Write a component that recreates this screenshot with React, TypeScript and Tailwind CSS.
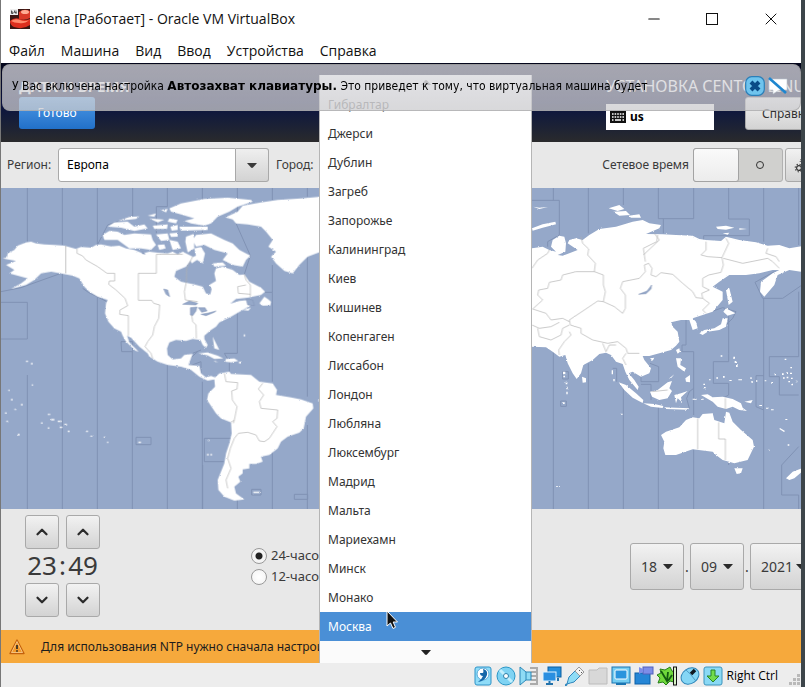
import React from "react";
import { Minus, X, ChevronUp, ChevronDown } from "lucide-react";

const guestFont = "font-['Noto_Sans','Open_Sans',sans-serif]";
const hostFont = "font-['Open_Sans','Noto_Sans',sans-serif]";
const raised =
  "rounded-[3px] border border-[#a9a9a9] bg-gradient-to-b from-[#f2f2f2] to-[#d3d3d3]";

const cities = [
  "Гибралтар", "Джерси", "Дублин", "Загреб", "Запорожье", "Калининград", "Киев",
  "Кишинев", "Копенгаген", "Лиссабон", "Лондон", "Любляна", "Люксембург", "Мадрид",
  "Мальта", "Мариехамн", "Минск", "Монако", "Москва",
];

function Caret({ className = "" }: { className?: string }) {
  return (
    <svg className={"h-[5px] w-[10px] shrink-0 " + className} viewBox="0 0 10 5" aria-hidden="true">
      <path d="M0 0H10L6 4.6Q5 5.3 4 4.6Z" fill="currentColor" />
    </svg>
  );
}

function TitleBar() {
  return (
    <header className="flex h-[37px] shrink-0 items-center bg-white pl-[9px] text-[14px] text-[#111]">
      <svg className="h-5 w-5" viewBox="0 0 20 20" aria-hidden="true">
        <rect width="20" height="20" fill="#3b1714" />
        <path d="M9 3Q14 -1 20 2V9Q15 12 9 10Z" fill="#d93a28" />
        <ellipse cx="15" cy="3" rx="4" ry="2" fill="#ffad94" />
        <path d="M0 12Q4 8 10 10Q15 12 20 10V16Q13 21 4 18Q0 16 0 12Z" fill="#dd2f1e" />
        <path d="M1 12Q5 9 10 11Q15 13 19 11Q15 15 9 14Q4 14 1 12Z" fill="#ff8a6c" />
        <rect width="8" height="6" fill="#eee" />
        <path d="M1.5 1.5V4.5H3V3H1.5M4.5 1.5V3.5H6.5M6 1.5V5" stroke="#333" strokeWidth=".8" fill="none" />
      </svg>
      <h1 className="ml-[5px] whitespace-nowrap">elena [Работает] - Oracle VM VirtualBox</h1>
      <div className="ml-auto flex h-full">
        <button aria-label="Свернуть" className="flex w-[58px] items-center justify-center">
          <Minus className="h-[18px] w-[18px]" strokeWidth={1.4} />
        </button>
        <button aria-label="Развернуть" className="flex w-[58px] items-center justify-center">
          <svg className="h-3 w-3" viewBox="0 0 12 12" aria-hidden="true">
            <rect x=".5" y=".5" width="11" height="11" fill="none" stroke="#111" />
          </svg>
        </button>
        <button aria-label="Закрыть" className="flex w-[60px] items-center justify-center">
          <X className="h-5 w-5" strokeWidth={1.2} />
        </button>
      </div>
    </header>
  );
}

function MenuBar() {
  return (
    <nav className="flex h-[26px] shrink-0 items-center gap-4 bg-white pl-2 text-[14px] text-[#111]">
      {["Файл", "Машина", "Вид", "Ввод", "Устройства", "Справка"].map((m) => (
        <button key={m}>{m}</button>
      ))}
    </nav>
  );
}

function InstallerHeader() {
  return (
    <div className="flex h-[79px] shrink-0 items-start bg-gradient-to-b from-[#03051a] via-[#0a1040] to-[#2a2a2c] pt-3 text-white">
      <div className="pl-[18px]">
        <h2 className="text-[15px] leading-[22px] font-bold">ДАТА И ВРЕМЯ</h2>
        <button className="h-8 w-[76px] rounded-[3px] bg-gradient-to-b from-[#4f9ae6] to-[#2170c9] text-[12px]">
          Готово
        </button>
      </div>
      <div className="ml-auto w-[195px] shrink-0">
        <div className="text-[16px] leading-[22px] whitespace-nowrap">УСТАНОВКА CENTOS LINUX 8</div>
        <div className="flex items-start">
          <button className="mt-[7px] flex h-[26px] w-[108px] shrink-0 items-center gap-1 bg-white pl-1 text-[12px] font-bold text-black">
            <svg className="h-3 w-4" viewBox="0 0 16 12" aria-hidden="true">
              <rect width="16" height="12" fill="#111" />
              <path d="M2 3H14M2 6H14" stroke="#fff" strokeWidth="1.5" strokeDasharray="1.6 1" />
              <path d="M2 9H3.5M5 9H11M12.5 9H14" stroke="#fff" strokeWidth="1.5" />
            </svg>
            us
          </button>
          <button className={raised + " ml-[31px] h-[33px] w-[88px] shrink-0 pl-4 text-left text-[12px] text-[#333]"}>
            Справка
          </button>
        </div>
      </div>
    </div>
  );
}

function LocationRow() {
  return (
    <div className="-mr-[20px] flex h-[46px] shrink-0 items-center pl-[6px] text-[12px] text-[#3a3a3a]">
      <label htmlFor="region" className="w-[51px]">Регион:</label>
      <div className="flex h-[34px] w-[211px] shrink-0">
        <select
          id="region"
          className="w-[178px] appearance-none rounded-l-[3px] border border-[#a9a9a9] bg-white pl-2 text-[12px] text-black"
        >
          <option>Европа</option>
        </select>
        <button
          aria-label="Открыть список регионов"
          className="flex flex-1 items-center justify-center rounded-r-[3px] border border-l-0 border-[#a9a9a9] bg-gradient-to-b from-[#efefef] to-[#d3d3d3]"
        >
          <Caret />
        </button>
      </div>
      <label htmlFor="city" className="ml-[7px]">Город:</label>
      <input id="city" defaultValue="" className="ml-2 h-[34px] w-[180px] rounded-[3px] border border-[#a9a9a9] bg-white" />
      <label htmlFor="ntp" className="ml-auto">Сетевое время</label>
      <div className="relative ml-1 h-[34px] w-[90px] shrink-0 rounded-[3px] border border-[#b1b1b1] bg-[#d0d0ce]">
        <input id="ntp" type="checkbox" role="switch" className="absolute inset-0 h-full w-full appearance-none" />
        <span className="pointer-events-none absolute -top-px -left-px h-[34px] w-[46px] rounded-[3px] border border-[#a3a3a3] bg-gradient-to-b from-[#fafafa] to-[#ececec]" />
        <span className="pointer-events-none absolute top-3 right-[18px] h-2 w-2 rounded-full border border-[#333]" />
      </div>
      <button aria-label="Настройки NTP" className={raised + " ml-[2px] flex h-[34px] w-[36px] shrink-0 items-center pl-2"}>
        <svg className="h-4 w-4" viewBox="0 0 16 16" fill="none" stroke="#333" aria-hidden="true">
          <circle cx="5" cy="11" r="2.4" strokeWidth="1.2" />
          <circle cx="5" cy="11" r="3.8" strokeWidth="1.2" strokeDasharray="1.2 1.8" />
          <circle cx="9" cy="4" r="1.6" strokeWidth="1.2" />
          <circle cx="9" cy="4" r="2.8" strokeWidth="1" strokeDasharray="1 1.5" />
        </svg>
      </button>
    </div>
  );
}

function WorldMap() {
  return (
    <svg
      className="block w-full shrink-0 bg-[#95a8c9]"
      viewBox="0 9 2400 963"
      preserveAspectRatio="xMinYMin slice"
      role="img"
      aria-label="Карта часовых поясов"
    >
      <defs>
        <filter id="coast" x="0" y="0" width="100%" height="100%">
          <feTurbulence type="fractalNoise" baseFrequency="0.16" numOctaves="2" seed="4" />
          <feDisplacementMap in="SourceGraphic" scale="6" xChannelSelector="R" yChannelSelector="G" />
        </filter>
      </defs>
      {/* ocean meridians */}
      <g stroke="#8092b4" strokeWidth="3" fill="none">
        <path d="M79 9V170M184 9V180M184 265V972M289 9V180L320 120L395 93V9M289 335V972M499 9V65H466V145M394 500V972M499 540V972M604 9V150M604 590V972M709 9V110M709 380V505H670M814 9V45M814 240V322M814 322V590M919 9V35M919 215V635M919 720V972M814 800V972M709 945V972M957 9V972" />
        <path d="M0 320L60 308L180 265M0 352H79V462H0M79 570V972M245 310L262 322L318 350M605 840V972M610 760H690M610 760V830H668M360 470H395V500H362ZM405 757H450V779H405ZM752 913H780V930H752ZM880 928H920V943H880ZM560 545L600 530V565M575 505L600 495M670 505L685 530V560M705 115L748 212L730 268M792 322H814M562 525L590 500" />
        <g transform="translate(1575 0)">
          <path d="M18 46H100V150L65 170V185M82 9V46M82 495V972M187 9V145M187 535V972M292 9V60M292 610V972M397 9V101H503V9M412 101V145M608 9V102H670V152H533V165M713 9V170M713 340V972M818 9V180M818 320V515M480 405V480H468V500H503V690M503 700V972M818 515H730V575H760V630H818M608 505V530H562V595H608V630L590 640M713 675L690 665V572H713M818 785L767 840V930H818V972M608 370V505M608 690V840M397 660V972M398 590H345V545M398 590V545L372 535M345 598H375V645M260 550H272V590M110 560H127V582H110ZM104 648H121V664H104ZM687 292L710 340H770L828 300M687 292L745 260M540 385L590 368L630 380L620 400L590 430M482 640L490 620L503 610M482 640L490 670" />
        </g>
      </g>
      <g fill="#fff" filter="url(#coast)">
        {/* the Americas */}
        <path d="M5 220L18 217L20 205L40 195L50 182L75 172L90 170L105 175L130 178L160 180L190 182L225 192L240 186L270 188L285 180L300 178L330 184L355 182L375 190L400 195L425 205L445 200L470 203L500 205L515 200L530 208L545 200L575 215L570 225L555 245L525 258L520 275L540 290L580 298L605 305L615 325L628 328L632 312L625 300L645 288L640 265L645 250L665 245L695 255L715 270L730 268L745 290L780 308L792 320L780 330L740 338L705 342L688 356L715 348L745 345L748 362L720 378L690 395L670 405L655 412L645 425L630 435L610 452L610 462L620 480L615 489L605 480L598 465L575 462L555 468L525 465L505 472L498 490L500 510L515 523L540 520L550 510L575 507L568 525L562 540L595 543L600 565L615 577L630 573L642 577L655 565L685 560L690 567L720 568L750 570L775 590L815 595L828 615L825 630L870 637L900 643L935 655L937 670L915 695L908 730L895 743L860 755L840 770L830 790L805 810L780 815L785 830L765 837L745 837L745 850L725 853L725 865L712 875L718 890L700 905L705 925L730 943L700 947L670 935L652 915L650 885L660 860L670 835L675 805L685 775L692 745L690 712L660 700L645 685L625 655L618 645L622 625L642 605L640 583L620 587L595 575L570 555L540 545L500 540L470 530L445 515L440 505L415 485L390 458L378 452L385 472L413 500L403 497L375 470L365 452L360 440L340 430L322 410L312 385L315 355L320 345L290 335L265 320L250 305L235 280L215 272L180 265L150 260L120 265L100 285L75 300L30 312L60 295L80 280L50 272L25 265L40 255L15 240L45 228Z" />
        <path d="M673 97L710 80L725 62L780 52L830 45L900 40L960 35V200L920 215L895 240L875 265L850 258L825 235L810 215L825 200L802 185L815 165L795 140L780 125L740 118L705 115L695 103Z" />
        <path d="M505 70L540 55L610 42L680 38L750 45L755 50L710 65L685 80L650 95L630 115L610 122L570 115L550 108L580 100L540 88L510 80ZM535 125L620 125V135L540 137ZM585 150L630 145L670 165L695 175L715 195L748 212L735 225L725 245L695 240L665 225L680 205L640 195L610 180L585 185L575 165ZM555 155L578 147L580 190L560 202L553 170ZM580 190L600 186L612 205L605 235L588 225L572 235L565 220L585 212ZM635 235L665 232L675 242L640 245Z" />
        <path d="M305 150L325 138L350 140L370 150L400 145L450 148L455 165L465 180L450 195L420 190L385 190L350 165L310 165ZM320 125L340 112L380 110L400 125L430 118L440 130L400 138L360 128ZM350 108L385 96L415 94L405 102ZM440 92L465 85L460 95ZM445 100L490 104L470 112ZM455 122L500 118L498 132L460 132ZM465 148L500 145L505 165L480 168ZM505 165L530 170L540 190L515 195ZM508 125L530 120L530 135L512 137ZM470 180L490 178L494 190L475 195ZM480 75L500 72L495 82ZM505 100L530 105L525 115L500 110ZM505 145L530 143L530 155L510 156Z" />
        <path d="M775 355L790 335L800 342L810 350L808 361L785 362ZM725 375L750 368L742 377ZM592 505L620 502L650 512L667 520L640 522L620 511ZM675 522L700 520L712 528L690 532L672 530ZM640 528L652 531H640ZM714 530H722V535H714ZM728 448H732V454H728ZM308 755H313V758H308ZM318 770H322V774H318ZM620 765H626V768H620ZM618 807H623V811H618ZM628 807H633V811H628ZM412 770H420V774H412ZM757 920H776V924H757ZM952 645H957V649H952ZM635 455L640 490L655 495ZM918 935L932 942Z" />
        {/* Eurasia and Oceania */}
        <g transform="translate(1575 0)">
          <path d="M-30 190L18 190L50 185L70 195L90 200L75 185L80 165L100 152L115 155L120 175L118 200L95 210L110 212L130 205L155 195L125 175L130 165L150 160L170 165L190 150L220 132L270 125L320 110L350 105L370 115L405 120L400 130L360 147L410 148L450 150L500 152L520 162L540 165L585 168L600 155L640 165L690 172L725 182L760 180L790 190L835 182V262L790 255L755 270L745 300L715 335L702 320L705 290L740 265L760 255L740 255L700 265L660 270L610 270L580 290L560 305L590 320L590 345L560 380L530 390L500 400L510 410L515 430L500 435L490 405L465 405L435 412L440 425L455 440L460 470L450 482L435 495L400 505L370 513L350 513L355 525L375 550L370 565L345 575L320 560L308 565L325 585L338 605L335 615L310 585L298 560L290 537L270 530L255 510L240 503L220 507L200 525L172 540L165 565L152 582L140 565L125 535L118 510L100 515L80 500L60 487L18 485L-30 480Z" />
          <path d="M405 750L420 740L460 727L480 705L500 697L520 700L530 687L560 685L565 705L595 715L600 680L610 683L620 710L645 735L680 765L684 785L665 825L625 835L590 825L570 810L560 800L500 793L450 810L418 810L412 790L415 770ZM625 850L650 850L645 865L632 867ZM780 880L800 860L828 850V860L805 880L790 885Z" />
          <path d="M278 592L300 600L330 625L352 645L350 654L320 638L295 615ZM352 655L385 657L412 663L410 669L375 665ZM372 620L395 615L425 592L438 588L430 610L438 618L425 640L400 645L378 635ZM445 630L465 625L485 618L465 637L468 652L455 640L450 655ZM450 520L465 520L463 540L480 550L475 560L455 545ZM478 580L492 570L492 592L480 590ZM525 630L545 628L560 637L590 635L620 642L645 655L650 668L663 678L640 675L620 665L600 672L575 665L560 650ZM415 667L450 668L490 670L485 674L420 672ZM655 650L680 645L675 655ZM168 575L180 580L180 592L170 593ZM450 495L460 490L462 500L455 506ZM372 520L385 518L380 527Z" />
          <path d="M600 315L610 310L620 350L608 360ZM592 380L600 370L628 385L605 392ZM590 400L605 400L600 425L580 435L545 440L530 450L520 445L535 435L565 430L585 418ZM248 70L280 60L295 72L275 78ZM262 80L300 78L312 90L280 92ZM308 92L340 88L345 98L315 98ZM18 130L50 118L88 110L90 118L50 128L20 137ZM22 65L40 68L66 66L40 72ZM570 125L600 122L625 128L600 134L575 132ZM640 130L663 132L640 134ZM590 145L610 143L605 149ZM820 312L828 322Z" />
          <path d="M111 560h7v8h-7ZM112 572h5v5h-5ZM119 590h5v8h-5ZM121 605h4v8h-4ZM121 620h4v8h-4ZM109 652h7v5h-7ZM257 556h4v12h-4ZM262 582h4v7h-4ZM283 686h7v3h-7ZM90 903h12v2h-12ZM584 511h5v4h-5ZM622 515h5v6h-5ZM626 528h5v6h-5ZM630 540h5v6h-5ZM571 577h5v4h-5ZM591 573h5v5h-5ZM610 585h7v3h-7ZM637 583h9v3h-9ZM673 577h4v5h-4ZM676 588h5v5h-5ZM690 586h4v4h-4ZM716 586h5v3h-5ZM736 591h5v3h-5ZM746 567h4v4h-4ZM768 565h5v5h-5ZM771 577h5v4h-5ZM781 562h5v5h-5ZM792 563h6v4h-6ZM782 575h5v5h-5ZM795 578h5v4h-5ZM787 588h5v4h-5ZM796 596h5v5h-5ZM809 587h5v5h-5ZM776 521h5v4h-5ZM793 546h5v4h-5ZM532 596h5v4h-5ZM534 606h5v4h-5ZM549 583h5v3h-5ZM726 794h5v3h-5ZM785 778h5v4h-5ZM762 729l15 9l-3 3l-14 -9ZM700 660h8v3h-8ZM720 668h7v3h-7ZM735 673h8v3h-8ZM500 641h12v3h-12ZM525 641h8v3h-8ZM778 702h6v3h-6ZM430 580l15 -12l-12 14Z" />
        </g>
        <g transform="translate(0 552)">
          <path d="M40 120h6v3h-6ZM60 105h5v4h-5ZM30 90h5v4h-5ZM140 135h8v3h-8ZM150 150h10v4h-10ZM170 155h12v4h-12ZM176 173h8v4h-8ZM190 165h8v4h-8ZM200 185h6v4h-6ZM255 185h6v4h-6ZM268 200h6v3h-6ZM140 175h5v4h-5ZM120 160h5v4h-5ZM12 130h5v4h-5ZM16 155h5v4h-5ZM75 -25h6v4h-6ZM90 -18h5v4h-5ZM50 195h6v4h-6ZM22 62h4v4h-4ZM92 46h4v4h-4Z" />
        </g>
      </g>
      {/* lakes and inland water */}
      <g fill="#95a8c9" stroke="#8092b4" strokeWidth="1.5">
        <path d="M545 358L565 348L590 355L585 360ZM568 368L588 366L585 378L575 392L568 390ZM592 368L612 368L618 378L602 382ZM600 388L622 384L645 378L640 382L615 392ZM488 312L500 315L506 335L495 328Z" />
        <path d="M735 342L755 345L760 362L740 360ZM1913 328L1938 318L1952 300L1950 312L1935 326ZM425 200L432 208L424 206Z" />
      </g>
      {/* zone borders on land */}
      <g stroke="#b0b0b0" strokeWidth="2" fill="none" strokeLinejoin="round">
        <path d="M194 182V265M228 192L228 205L245 213L255 225L290 245L318 265H341V288H325L323 298L345 315L372 340L380 362L357 375L356 388L382 392V452M412 265H466V208H545M412 265V346H452L458 355L476 360L473 400L460 425L455 450L440 470L432 485L450 505L455 520M575 215L557 250L556 290L550 320L553 345M572 390L575 410L585 420L586 460M730 268L735 285L748 300V335M735 300L710 305L712 325L748 328M553 345L590 350" />
        <path d="M670 565L675 590L710 593L708 612L692 618L694 645L708 665L700 705L690 712M700 705L697 715M785 595L772 612L788 630L775 650L780 670L830 675L828 700L815 710L828 725L805 760L790 770L775 768L765 750L740 742L712 745L700 760L688 790L680 820L690 850L675 885L680 910" />
        <g transform="translate(1575 0)">
          <path d="M18 250L35 225L65 205L70 195M165 155L170 175L188 192L185 210L208 235L205 260L150 260L110 270L105 285L70 292L65 310L38 315L35 330L50 345L20 372L60 385L75 405L110 400L130 410M205 260L232 270V300L238 320L232 350L265 365L290 385L298 370V330L283 310L290 290L340 280L358 260L355 240L368 235L378 250L375 270L390 275L405 263L440 268L470 295L500 320L510 338L530 340L550 355L530 375L540 385M358 230L352 190L392 170L395 150M352 210L400 165L385 145M530 340L527 325L550 315L530 305V280L548 270L585 262L592 240L588 218L545 215L525 210L540 195L540 170M588 218L608 175L600 160M592 220L650 235L725 220L740 230L760 250M725 190L720 205L750 215L760 230M232 350L215 348L175 375L130 405L133 420L165 430V445L200 465L245 475L275 470L300 490L305 505L340 505M18 420L40 430L75 425L100 412M35 430L40 455L75 465L105 450L110 430L130 420M130 440L135 450L115 470L98 495L100 510M230 475L240 500L250 480L270 480M300 540L290 520L300 505M515 700V793M578 712V762H598V825M598 640V672M378 620L425 615" />
        </g>
      </g>
    </svg>
  );
}

function TimeColumn({ value, label }: { value: string; label: string }) {
  const step = raised + " flex w-[34px] items-center justify-center text-[#2b2b2b]";
  return (
    <div className="flex flex-col items-center">
      <button aria-label={label + " больше"} className={step + " h-[34px]"}>
        <ChevronUp className="h-[18px] w-[18px]" strokeWidth={3} />
      </button>
      <output aria-label={label} className="h-[34px] text-[26px] leading-8">{value}</output>
      <button aria-label={label + " меньше"} className={step + " h-[34px]"}>
        <ChevronDown className="h-[18px] w-[18px]" strokeWidth={3} />
      </button>
    </div>
  );
}

function DateSelect({ value, label, width }: { value: string; label: string; width: string }) {
  return (
    <div className={"relative h-[47px] shrink-0 " + width}>
      <select aria-label={label} className={raised + " h-full w-full appearance-none pl-[10px] text-[14px]"}>
        <option>{value}</option>
      </select>
      <Caret className="pointer-events-none absolute top-[21px] right-[11px] text-[#2b2b2b]" />
    </div>
  );
}

function ClockPanel() {
  const radio =
    "h-4 w-4 appearance-none rounded-full border border-[#999] bg-[radial-gradient(circle,#fff_0,#f2f2f2_100%)] checked:bg-[radial-gradient(circle,#222_0_3px,#f4f4f4_4px)]";
  return (
    <div className="-mr-[16px] flex h-[121px] shrink-0 items-start pt-[6px] pl-6 text-[#3a3a3a]">
      <div className="flex">
        <TimeColumn value="23" label="Часы" />
        <div className="w-[7px] pt-[34px] text-center text-[26px] leading-8">:</div>
        <TimeColumn value="49" label="Минуты" />
      </div>
      <fieldset className="mt-[30px] ml-[151px] flex w-[90px] flex-col text-[13px] leading-[21px] whitespace-nowrap">
        <label className="flex items-center gap-1">
          <input type="radio" name="fmt" defaultChecked className={radio} />
          24-часовой
        </label>
        <label className="flex items-center gap-1">
          <input type="radio" name="fmt" className={radio} />
          12-часовой
        </label>
      </fieldset>
      <div className="mt-7 ml-auto flex items-center text-[14px]">
        <DateSelect value="18" label="День" width="w-[54px]" />
        <span className="w-[6px] text-center">.</span>
        <DateSelect value="09" label="Месяц" width="w-[54px]" />
        <span className="w-[6px] text-center">.</span>
        <DateSelect value="2021" label="Год" width="w-[67px]" />
      </div>
    </div>
  );
}

function CityMenu() {
  return (
    <div className="absolute top-3 left-[318px] w-[213px] border-x border-[#b5b5b5] bg-white text-[12px] text-[#333]">
      <div className="flex h-[15px] items-center justify-center bg-[#fafafa]">
        <Caret className="rotate-180 text-[#777]" />
      </div>
      <ul role="listbox" aria-label="Город">
        {cities.map((c) => (
          <li
            key={c}
            role="option"
            aria-selected={c === "Москва"}
            className="h-[29px] pl-2 leading-[29px] first:text-[#777] aria-selected:bg-[#4a8fd6] aria-selected:text-white"
          >
            {c}
          </li>
        ))}
      </ul>
      <div className="flex h-[22px] items-center justify-center bg-[#fbfbfb]">
        <Caret className="text-[#222]" />
      </div>
    </div>
  );
}

function Notice() {
  return (
    <div
      role="status"
      className="absolute top-px right-0 left-px flex h-[47px] items-center rounded-lg border border-[#999]/60 bg-gradient-to-b from-[#dcdce2]/75 to-[#cbcbce]/75 pr-3 pb-1 pl-[9px] font-['DejaVu_Sans_Condensed','DejaVu_Sans',sans-serif] text-[12px] text-black"
    >
      <p className="whitespace-nowrap">
        У Вас включена настройка <b className="font-['DejaVu_Sans',sans-serif]">Автозахват клавиатуры.</b> Это приведет к тому, что виртуальная машина будет
      </p>
      <button aria-label="Закрыть сообщение" className="ml-auto">
        <svg className="h-5 w-5" viewBox="0 0 20 20">
          <rect x=".7" y=".7" width="18.6" height="18.6" rx="6" fill="#6fc4ee" stroke="#2b7fb8" strokeWidth="1.2" />
          <path d="M6 6L14 14M14 6L6 14" stroke="#0b4a86" strokeWidth="4" />
        </svg>
      </button>
      <button aria-label="Больше не показывать" className="ml-[3px]">
        <svg className="h-5 w-5" viewBox="0 0 20 20">
          <path d="M1 3H19V14H11L5 18V14H1Z" fill="#fff" stroke="#b9c4cc" strokeWidth=".6" />
          <path d="M1 2L18 17" stroke="#1e86cf" strokeWidth="2.6" />
        </svg>
      </button>
    </div>
  );
}

function StatusBar() {
  const icon = "h-5 w-5 shrink-0";
  const b = "#1667a8";
  return (
    <footer className="flex h-6 shrink-0 items-center justify-end gap-[3px] bg-[#ededed] pt-[2px] text-[12px] text-black">
      <svg className={icon} viewBox="0 0 20 20"><rect x="2" y="1" width="16" height="18" rx="2" fill="#8fdcf8" stroke="#2e93c8" /><circle cx="10" cy="8" r="6" fill="#fff" stroke="#5aa9d8" /><path d="M10 3Q15 4 14 9Q12 15 5 16Q9 13 10 10Q7 10 7 7H9.500Q11 7 10 3Z" fill={b} /></svg>
      <svg className={icon} viewBox="0 0 20 20"><circle cx="10" cy="10" r="9" fill="#7fd3f3" stroke="#2b97c7" /><path d="M10 10L4 4M10 10L16 16" stroke="#c1effd" strokeWidth="3" /><circle cx="10" cy="10" r="2.5" fill="#fff" stroke="#2b7fa8" /></svg>
      <svg className={icon} viewBox="0 0 20 20"><path d="M11 2H18V18H11M12 6H18M12 10H18M12 14H18" stroke="#ababab" strokeWidth="2" fill="none" /><path d="M1 1L7 6H12V14H7L1 19Z" fill="#8edbf5" stroke="#2b88b8" /><path d="M7 6V14" stroke="#2b88b8" /></svg>
      <svg className={icon} viewBox="0 0 20 20"><rect x="6" y="1" width="13" height="10" fill="#248fdc" stroke="#0b5fa0" /><rect x="1" y="6" width="13" height="9" fill="#2a8fe0" stroke="#dff3ff" /><path d="M4 18H11M7.500 15V18M16 12V15" stroke="#2272ab" strokeWidth="2" /></svg>
      <svg className={icon} viewBox="0 0 20 20"><path d="M10 5L15 10L9 16Q5 17 2 18Q3 14 4 11Z" fill="#8edcf6" stroke="#2f86bd" /><path d="M14 1L19 6L15 10L10 5Z" fill="#f4f4f4" stroke="#999" /><path d="M14 4L15 5M16 6L17 7" stroke="#555" /><path d="M2 18L0 20" stroke="#2f86bd" strokeWidth="2" /></svg>
      <svg className={icon} viewBox="0 0 20 20"><path d="M1 4H9L11 2H19V18H1Z" fill="#d8d8d8" stroke="#bcbcbc" /></svg>
      <svg className={icon} viewBox="0 0 20 20"><rect x="1" y="1" width="18" height="16" fill="#74cdf2" stroke="#1a75b2" /><rect x="4" y="4" width="12" height="9" rx="1" fill="#2b94dd" stroke="#fff" /><path d="M5 18H15" stroke="#1a75b2" strokeWidth="2" /></svg>
      <svg className={icon} viewBox="0 0 20 20"><rect x="1" y="7" width="15" height="11" fill="#2586d6" stroke="#0d61a8" /><rect x="9" y="1" width="10" height="7" fill="#7d8de8" stroke="#5261bb" /><path d="M9 3L5 1V8L9 6Z" fill="#7d8de8" /></svg>
      <svg className={icon} viewBox="0 0 20 20"><path d="M3 3L8 4L13 1L15 5L17 6V16L13 15L9 19L6 16L1 17L3 12L0 9L4 7Z" fill="#70d83c" stroke="#267f18" /><path d="M4 5L10 15L11 6M11 15L15 9" stroke="#125b10" strokeWidth="1.800" fill="none" /><rect x="16.5" y="1" width="3" height="18" fill="#d8f2c8" stroke="#111" /></svg>
      <svg className={icon} viewBox="0 0 20 20"><ellipse cx="10" cy="10" rx="9.500" ry="7.500" transform="rotate(-35 10 10)" fill="#85d6f5" stroke="#2f85b8" /><path d="M6 4Q10 7 15 14" stroke="#4e9cc8" fill="none" /><path d="M11 8L15 4" stroke="#101820" strokeWidth="3.500" /></svg>
      <svg className={icon} viewBox="0 0 20 20"><rect x="1" y="1" width="18" height="18" rx="2" fill="#8ad9f5" stroke="#3d94bd" /><path d="M8 4H12V10H16L10 16L4 10H8Z" fill="#71dc4d" stroke="#298527" /></svg>
      <span className="ml-px whitespace-nowrap">Right Ctrl</span>
      <svg className="ml-2 h-[14px] w-3 self-end" viewBox="0 0 12 14" fill="#b9b9b9"><path d="M8 1h3v3H8ZM8 5h3v3H8ZM4 5h3v3H4ZM8 9h3v3H8ZM4 9h3v3H4ZM0 9h3v3H0Z" /></svg>
    </footer>
  );
}

export default function App() {
  return (
    <div className={"flex min-h-screen bg-[#3d454a] " + hostFont}>
      <div className="mr-1 flex min-w-0 flex-1 flex-col border-l border-[#777] bg-[#e8e8e8]">
        <TitleBar />
        <MenuBar />
        <main className={"relative flex flex-col overflow-hidden " + guestFont}>
          <InstallerHeader />
          <LocationRow />
          <WorldMap />
          <ClockPanel />
          <div className="flex h-[33px] shrink-0 items-center bg-[#f6a93c] pl-2 text-[12px] whitespace-nowrap text-[#1c1c1c]">
            <svg className="h-4 w-4" viewBox="0 0 16 16" aria-hidden="true">
              <path d="M8 1L15 14.5H1Z" fill="#f39a2c" stroke="#c4610c" strokeWidth="1.4" strokeLinejoin="round" />
              <path d="M8 2.5L13.5 13.5H2.5Z" fill="none" stroke="#fbd9a0" strokeWidth=".7" />
              <path d="M8 6V10M8 11.3V12.8" stroke="#222" strokeWidth="1.6" />
            </svg>
            <p className="ml-4">Для использования NTP нужно сначала настроить сеть</p>
          </div>
          <CityMenu />
          <Notice />
          <svg className="pointer-events-none absolute top-[547px] left-[385px] h-5 w-3" viewBox="0 0 12 20" aria-hidden="true">
            <path d="M1 1V16L4.5 13L7 18.5L9.5 17.3L7.2 12H11.5Z" fill="#111" stroke="#fff" />
          </svg>
        </main>
        <StatusBar />
      </div>
    </div>
  );
}
